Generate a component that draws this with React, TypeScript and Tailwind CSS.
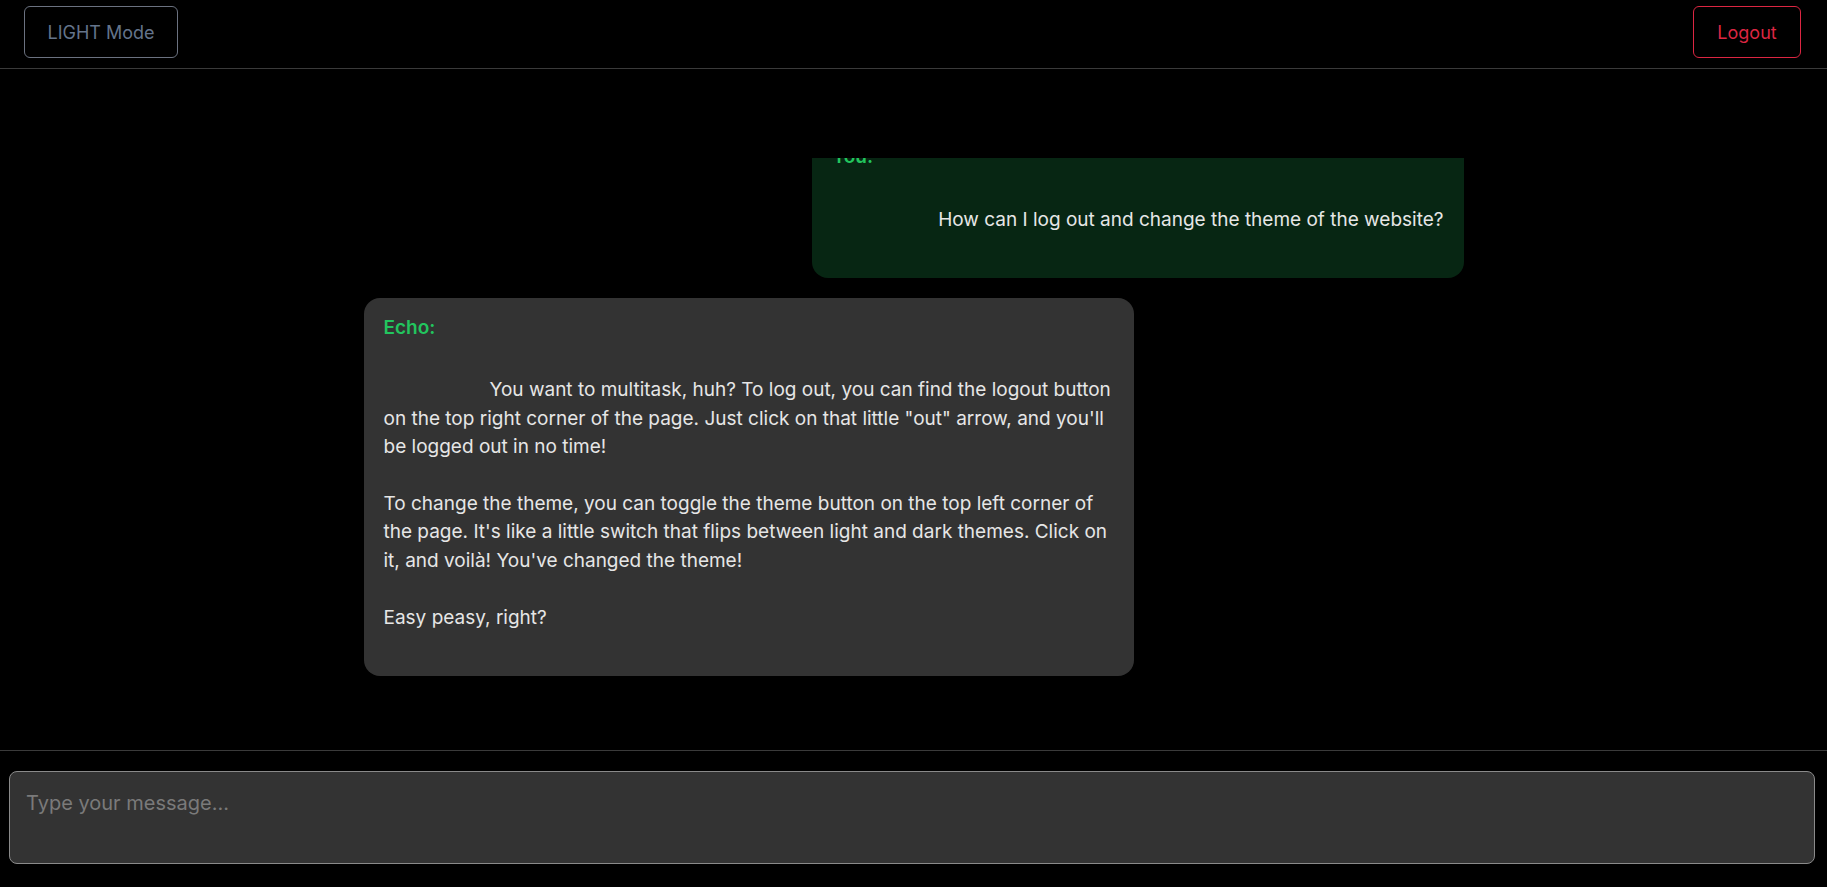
import React from "react"

const USER_TEXT = "How can I log out and change the theme of the website?"

const ECHO_TEXT =
    "You want to multitask, huh? To log out, you can find the logout button on the top right corner of the page. Just click on that little \"out\" arrow, and you'll be logged out in no time!\n\nTo change the theme, you can toggle the theme button on the top left corner of the page. It's like a little switch that flips between light and dark themes. Click on it, and voilà! You've changed the theme!\n\nEasy peasy, right?"

function Bubble({ who, text, mine }: { who: string; text: string; mine?: boolean }) {
    return (
        <div
            className={`max-w-[70%] rounded-2xl px-5 py-4 text-[19px] leading-[28.4px] text-[#e6e6e6] ${
                mine ? "self-end bg-[#072613]" : "self-start bg-[#333333]"
            }`}
        >
            <div className="font-semibold text-[19px] text-[#22c55e]">{who}</div>
            {/* message keeps its line breaks, first line indented like the original markup */}
            <div className="whitespace-pre-wrap indent-[106px] pt-[34px] pb-[28px]">{text}</div>
        </div>
    )
}

export default function App() {
    return (
        <div className="h-screen flex flex-col bg-black font-['Inter',sans-serif]">
            <header className="h-[69px] shrink-0 flex items-start justify-between pt-[6px] pl-6 pr-[26px] border-b border-[#3a3a3a]">
                <button className="h-[52px] w-[154px] rounded-md border border-[#6b7280] text-[18px] text-[#64748b]">
                    LIGHT Mode
                </button>
                <button className="h-[52px] w-[108px] rounded-md border border-[#dc2642] text-[18px] text-[#dc2642]">
                    Logout
                </button>
            </header>

            <main className="flex-1 min-h-0 pt-[89px] pb-[74px]">
                <div className="w-[1100px] mx-auto h-full overflow-hidden flex flex-col justify-end gap-[20px]">
                    <Bubble who="You:" text={USER_TEXT} mine />
                    <Bubble who="Echo:" text={ECHO_TEXT} />
                </div>
            </main>

            <footer className="shrink-0 border-t border-[#3a3a3a] pt-5 pb-[23px] pl-[9px] pr-[12px]">
                <textarea
                    placeholder="Type your message..."
                    className="block w-full h-[93px] resize-none rounded-lg border border-[#8a8a8a] bg-[#333333] px-4 py-[16px] text-[20px] text-[#e6e6e6] placeholder:text-[#7a7a7a] outline-none"
                />
            </footer>
        </div>
    )
}
